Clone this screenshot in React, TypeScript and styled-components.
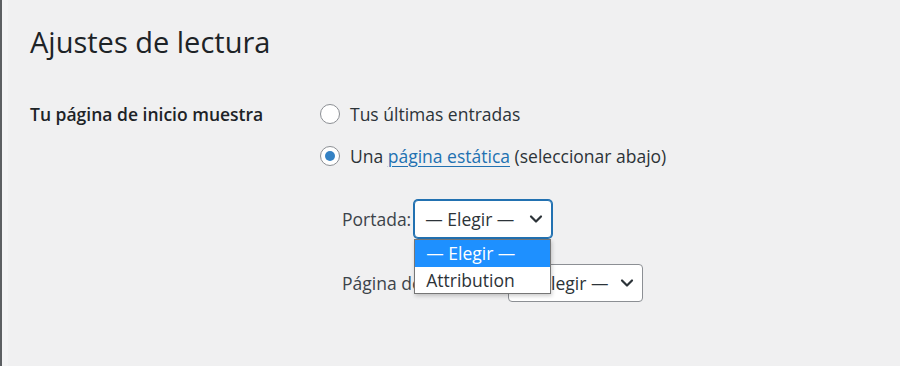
import React from 'react'
import styled, { createGlobalStyle } from 'styled-components'

const GlobalStyle = createGlobalStyle`
  html, body {
    margin: 0;
    padding: 0;
  }
  body {
    background: #f0f0f1;
    font-family: 'Open Sans', 'Noto Sans', sans-serif;
  }
`

const Page = styled.div`
  min-height: 366px;
  box-sizing: border-box;
  border-left: 2px solid #5c5f62;
  background: linear-gradient(to right, #f3f3f4 0, #f3f3f4 6px, #f0f0f1 6px);
  padding: 23px 0 0 28px;
`

const Title = styled.h1`
  margin: 0;
  font-size: 29px;
  font-weight: 400;
  line-height: 38px;
  color: #1d2327;
`

const FormRow = styled.div`
  display: flex;
  margin-top: 32px;
`

const RowLabel = styled.div`
  width: 290px;
  flex-shrink: 0;
  font-size: 17.5px;
  font-weight: 600;
  line-height: 42px;
  color: #1d2327;
`

const Choices = styled.div`
  display: flex;
  flex-direction: column;
`

const Choice = styled.label`
  display: flex;
  align-items: center;
  gap: 10px;
  height: 42px;
  font-size: 17.5px;
  color: #2c3338;
`

const Radio = styled.span<{ $checked?: boolean }>`
  width: 20px;
  height: 20px;
  box-sizing: border-box;
  border: 1px solid #8c8f94;
  border-radius: 50%;
  background: #fff;
  display: flex;
  align-items: center;
  justify-content: center;

  &::after {
    content: '';
    display: ${(p) => (p.$checked ? 'block' : 'none')};
    width: 10px;
    height: 10px;
    border-radius: 50%;
    background: #3582c4;
  }
`

const Link = styled.a`
  color: #2271b1;
  text-decoration: underline;
  text-underline-offset: 3px;
`

const PageSelects = styled.div`
  display: flex;
  flex-direction: column;
  gap: 26px;
  margin: 23px 0 0 22px;
`

const SelectRow = styled.div<{ $gap: number }>`
  display: flex;
  align-items: center;
  gap: ${(p) => p.$gap}px;
  font-size: 17.5px;
  color: #3c434a;
`

const SelectWrap = styled.div`
  position: relative;
`

const SelectBox = styled.div<{ $focused?: boolean; $width: number }>`
  width: ${(p) => p.$width}px;
  height: 38px;
  box-sizing: border-box;
  display: flex;
  align-items: center;
  justify-content: space-between;
  padding: 0 8px 0 10px;
  background: #fff;
  border: 1px solid ${(p) => (p.$focused ? '#2271b1' : '#8c8f94')};
  border-radius: 4px;
  box-shadow: ${(p) => (p.$focused ? '0 0 0 1px #2271b1' : 'none')};
  color: #2c3338;
  font-size: 17.5px;
`

const Dropdown = styled.ul`
  position: absolute;
  top: 39px;
  left: 0;
  z-index: 2;
  width: 137px;
  margin: 0;
  padding: 0;
  list-style: none;
  box-sizing: border-box;
  background: #fff;
  border: 1px solid #767676;
  box-shadow: 1px 2px 4px rgba(0, 0, 0, 0.2);
`

const Option = styled.li<{ $active?: boolean }>`
  height: ${(p) => (p.$active ? 27 : 26)}px;
  line-height: ${(p) => (p.$active ? 27 : 26)}px;
  padding-left: 11px;
  font-size: 17.5px;
  background: ${(p) => (p.$active ? '#1e90ff' : '#fff')};
  color: ${(p) => (p.$active ? '#fff' : '#2c3338')};
`

const Chevron = () => (
  <svg width="14" height="10" viewBox="0 0 14 10" fill="none">
    <path d="M2 2.5l5 5 5-5" stroke="#2c3338" strokeWidth="2.2" strokeLinecap="round" strokeLinejoin="round" />
  </svg>
)

export default function App() {
  return (
    <>
      <GlobalStyle />
      <Page>
        <Title>Ajustes de lectura</Title>
        <FormRow>
          <RowLabel>Tu página de inicio muestra</RowLabel>
          <Choices>
            <Choice>
              <Radio />
              Tus últimas entradas
            </Choice>
            <Choice>
              <Radio $checked />
              <span>
                Una <Link href="#">página estática</Link> (seleccionar abajo)
              </span>
            </Choice>
            <PageSelects>
              <SelectRow $gap={3}>
                Portada:
                <SelectWrap>
                  <SelectBox $focused $width={138}>
                    — Elegir —
                    <Chevron />
                  </SelectBox>
                  <Dropdown>
                    <Option $active>— Elegir —</Option>
                    <Option>Attribution</Option>
                  </Dropdown>
                </SelectWrap>
              </SelectRow>
              <SelectRow $gap={5}>
                Página de entradas:
                <SelectWrap>
                  <SelectBox $width={135}>
                    — Elegir —
                    <Chevron />
                  </SelectBox>
                </SelectWrap>
              </SelectRow>
            </PageSelects>
          </Choices>
        </FormRow>
      </Page>
    </>
  )
}
